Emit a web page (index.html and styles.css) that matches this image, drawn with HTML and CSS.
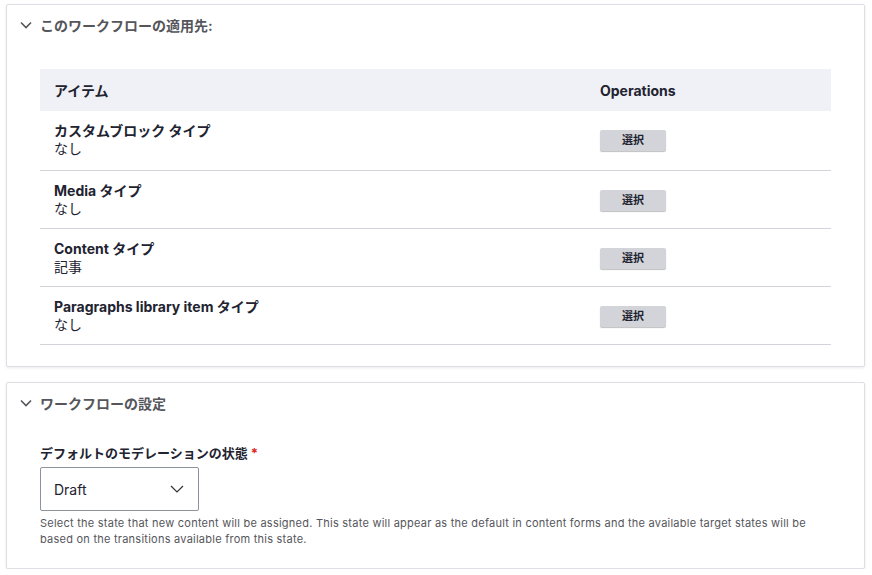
FILE: index.html
```html
<!DOCTYPE html>
<html lang="ja">
<head>
<meta charset="utf-8">
<link rel="stylesheet" href="styles.css">
</head>
<body>
<div class="page">
  <section class="card card-1">
    <div class="summary">
      <svg class="chev" width="12" height="8" viewBox="0 0 12 8"><path d="M1 1.5 L6 6.5 L11 1.5" fill="none" stroke="#55565b" stroke-width="1.6"/></svg>
      <span class="summary-text">このワークフローの適用先:</span>
    </div>
    <div class="card-body">
      <table class="tbl">
        <thead>
          <tr><th class="c-item">アイテム</th><th class="c-op">Operations</th></tr>
        </thead>
        <tbody>
          <tr><td class="c-item"><div class="t">カスタムブロック タイプ</div><div class="s">なし</div></td><td class="c-op"><span class="btn">選択</span></td></tr>
          <tr><td class="c-item"><div class="t">Media タイプ</div><div class="s">なし</div></td><td class="c-op"><span class="btn">選択</span></td></tr>
          <tr><td class="c-item"><div class="t">Content タイプ</div><div class="s">記事</div></td><td class="c-op"><span class="btn">選択</span></td></tr>
          <tr><td class="c-item"><div class="t">Paragraphs library item タイプ</div><div class="s">なし</div></td><td class="c-op"><span class="btn">選択</span></td></tr>
        </tbody>
      </table>
    </div>
  </section>
  <section class="card card-2">
    <div class="summary">
      <svg class="chev" width="12" height="8" viewBox="0 0 12 8"><path d="M1 1.5 L6 6.5 L11 1.5" fill="none" stroke="#55565b" stroke-width="1.6"/></svg>
      <span class="summary-text">ワークフローの設定</span>
    </div>
    <div class="card-body form">
      <div class="label">デフォルトのモデレーションの状態 <span class="req">*</span></div>
      <div class="select"><span>Draft</span><svg width="14" height="8" viewBox="0 0 14 8"><path d="M1 1 L7 7 L13 1" fill="none" stroke="#333" stroke-width="1.2"/></svg></div>
      <p class="desc">Select the state that new content will be assigned. This state will appear as the default in content forms and the available target states will be based on the transitions available from this state.</p>
    </div>
  </section>
</div>
</body>
</html>
```
FILE: styles.css
```css
html, body { margin: 0; padding: 0; background: #fff; }
body { font-family: Inter, "Noto Sans CJK JP", sans-serif; color: #222330; }
.page { padding: 4px 7px 0 6px; display: flex; flex-direction: column; gap: 15px; }
.card {
  border: 1px solid #dedfe4;
  border-radius: 2px;
  box-shadow: 0 1px 3px rgba(0,0,0,0.08);
  background: #fff;
}
.card-1 { height: 361px; }
.card-2 { height: 185px; }
.summary {
  height: 39px;
  display: flex;
  align-items: center;
  padding-left: 13px;
  gap: 8px;
  box-sizing: border-box;
}
.chev { display: block; }
.summary-text { font-size: 14px; font-weight: 700; color: #55565b; }
.card-body { padding: 25px 33px 0 33px; }
.tbl { width: 100%; border-collapse: collapse; font-size: 14px; }
.tbl thead th {
  background: #f0f1f6;
  height: 42px;
  text-align: left;
  font-weight: 700;
  padding: 0 14px;
}
.tbl th.c-op, .tbl td.c-op { width: 231px; padding-left: 0; padding-right: 0; box-sizing: border-box; }
.tbl tbody td {
  border-bottom: 1px solid #d3d4d9;
  height: 58px;
  vertical-align: top;
  padding: 11px 14px 0;
  box-sizing: border-box;
}
.tbl tbody tr:first-child td { height: 59px; }
.tbl tbody td.c-op { padding: 19px 0 0; }
.t { font-weight: 700; line-height: 18px; }
.s { line-height: 18px; }
.btn {
  display: inline-block;
  width: 66px;
  height: 21px;
  line-height: 21px;
  background: #d3d4d9;
  border-radius: 2px;
  text-align: center;
  font-size: 11px;
  font-weight: 700;
  color: #222330;
  box-shadow: 0 1px 1px rgba(0,0,0,0.25);
}
.form { padding-top: 22px; }
.label { font-size: 13px; font-weight: 700; line-height: 18px; color: #222330; }
.req { color: #dc2323; }
.select {
  margin-top: 5px;
  width: 159px;
  height: 44px;
  box-sizing: border-box;
  border: 1px solid #8e929c;
  border-radius: 2px;
  display: flex;
  align-items: center;
  justify-content: space-between;
  padding: 0 14px 0 13px;
  font-size: 14px;
}
.select svg { display: block; }
.desc {
  margin: 4px 0 0;
  font-size: 11px;
  line-height: 16px;
  letter-spacing: 0.24px;
  color: #55565b;
  max-width: 795px;
}
```
